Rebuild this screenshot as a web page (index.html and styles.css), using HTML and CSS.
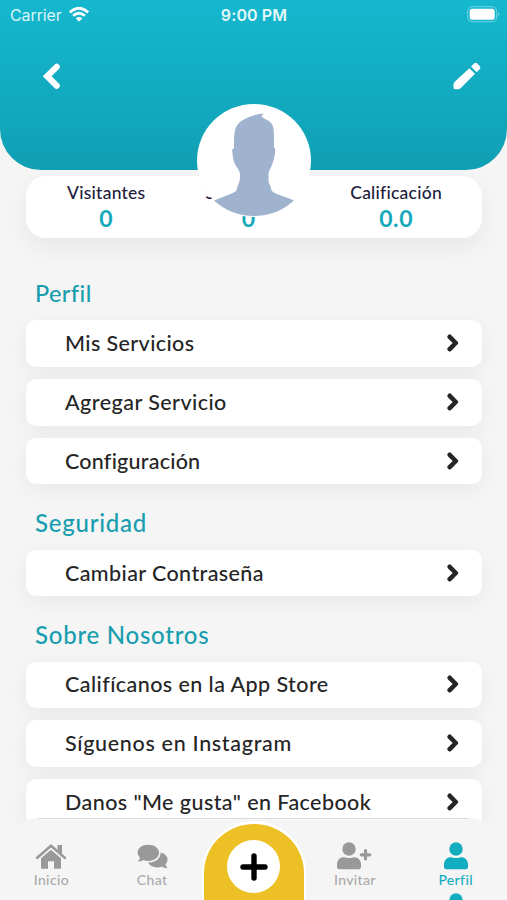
FILE: index.html
```html
<!DOCTYPE html>
<html lang="es">
<head>
<meta charset="utf-8">
<title>Perfil</title>
<link rel="stylesheet" href="styles.css">
</head>
<body>
<svg width="0" height="0" class="defs">
  <symbol id="chevron" viewBox="0 0 12 18"><path d="M2.700 2.800 8.800 9l-6.100 6.200" fill="none" stroke="currentColor" stroke-width="4.600" stroke-linecap="round" stroke-linejoin="round"/></symbol>
  <symbol id="user" viewBox="0 0 24 28"><circle cx="12" cy="7" r="6.700"/><path d="M0 25v-2.500C0 18 3 15.300 7 15.300c1.500 0 2.500.8 5 .8s3.500-.8 5-.8c4 0 7 2.700 7 7.200V25q0 2.300-2.300 2.300H2.300Q0 27.300 0 25z"/></symbol>
</svg>
<div class="screen">
  <header class="header">
    <div class="status">
      <div class="carrier"><span>Carrier</span>
        <svg width="20" height="15" viewBox="0 0 20 15" fill="none" stroke="#fff" stroke-width="2.800"><path d="M.9 5.400Q10-3 19.100 5.400M4.100 8.800q5.900-5.100 11.800 0"/><path d="M6.700 11.300q3.300-2.600 6.600 0L10 14.700z" fill="#fff" stroke="none"/></svg>
      </div>
      <span class="clock">9:00 PM</span>
      <svg class="battery" width="33" height="17" viewBox="0 0 33 17"><rect x=".7" y=".7" width="29" height="15" rx="4.500" fill="none" stroke="#fff" stroke-opacity=".4"/><rect x="2.700" y="2.700" width="25" height="11" rx="2.500" fill="#fff"/><path d="M31.200 6q2 2.200 0 4.500z" fill="#fff" fill-opacity=".5"/></svg>
    </div>
    <div class="tools">
      <svg width="18" height="27" viewBox="0 0 18 27"><path d="M13.700 3.900 4.200 13.300l9.500 9.400" fill="none" stroke="#fff" stroke-width="6.200" stroke-linecap="round"/></svg>
      <svg width="28" height="28" viewBox="0 0 28 28" fill="#fff"><path d="M16.300 6.200 22 11.800 8.100 25.700Q6.700 27.200 4.500 27.300H2Q.5 27.300.5 25.800V22.500Q.6 20.800 2 19.500zM18 4.500l3-3q1.600-1.500 3.300 0l2.300 2.400q1.500 1.700 0 3.300l-3 3z"/></svg>
    </div>
  </header>
  <div class="avatar">
    <svg width="114" height="113" viewBox="0 0 114 113"><path fill="#9fb2ce" d="M67 9.500C58 10 48 14 43 18c-6 5-6 12-6 26.500-2 0-2.200 2-1.500 5C36 54 36.500 58 39 62c2 3 4 5 4 9-.3 5 0 6-1.500 9-1.500 2-1 5-2.500 7-4 3-14 6-22 9.500Q34 112 57 112t40-15.500C89 93 80 90.500 76 88c-2-1.500-2-4-2.500-6-1.500-2-2-4-2-6V71c0-4 1.500-5 3-9 2-5 3-9 3.500-13 .5-3 .5-5-1-5.500 0-13 .5-20-2.500-24-3-4-7-4-9.500-6.500-.5-1.500 0-2 2-3.500z"/></svg>
  </div>
  <section class="stats">
    <div class="stat"><span class="label">Visitantes</span><b>0</b></div>
    <div class="stat middle"><span class="label">Seguidores</span><b>0</b></div>
    <div class="stat right"><span class="label">Calificación</span><b>0.0</b></div>
  </section>
  <main class="menu">
    <h2>Perfil</h2>
    <a class="row"><span class="mis">Mis Servicios</span><svg><use href="#chevron"/></svg></a>
    <a class="row"><span class="agregar">Agregar Servicio</span><svg><use href="#chevron"/></svg></a>
    <a class="row"><span class="config">Configuración</span><svg><use href="#chevron"/></svg></a>
    <h2 class="seg">Seguridad</h2>
    <a class="row"><span class="cambiar">Cambiar Contraseña</span><svg><use href="#chevron"/></svg></a>
    <h2 class="sobre">Sobre Nosotros</h2>
    <a class="row"><span class="store">Califícanos en la App Store</span><svg><use href="#chevron"/></svg></a>
    <a class="row"><span class="insta">Síguenos en Instagram</span><svg><use href="#chevron"/></svg></a>
    <a class="row"><span class="face">Danos "Me gusta" en Facebook</span><svg><use href="#chevron"/></svg></a>
  </main>
  <nav class="tabs">
    <div class="tab"><svg width="30" height="26" viewBox="0 0 30 26"><path d="M1.200 13.800 15 1.800l13.800 12" fill="none" stroke="#999" stroke-width="2.600" stroke-linecap="round"/><path d="M21.500 1H26v9l-4.500-4zM5 14.300 15 5.700l10 8.600v9.400q0 1-1 1h-6v-7.400h-6v7.400H6q-1 0-1-1z"/></svg><span>Inicio</span></div>
    <div class="tab"><svg width="31" height="26" viewBox="0 0 31 26"><path d="M11.300.8C17.500.8 22 4.300 22 8.800s-4.500 8.100-10.700 8.100q-2.700 0-5-.9-2.500 1.700-5.600 1.500 1.700-1.700 2.400-3.600Q.6 11.700.6 8.800c0-4.500 4.500-8 10.700-8z"/><path d="M23.600 8.400c4 1 7 3.700 7 7.100q0 2.900-2.300 5 1 2.200 2.300 3.700-3.200.3-5.600-1.600-2.100.9-4.800.9-6.300 0-9.200-4.900c7.200 0 12.700-4 12.600-10.200z"/></svg><span>Chat</span></div>
    <div class="add"><div class="disc"><svg width="28" height="28" viewBox="0 0 28 28"><path d="M14 3v22M3 14h22" stroke="#000" stroke-width="5.400" stroke-linecap="round"/></svg></div></div>
    <div class="tab invite"><svg width="35" height="28" viewBox="0 0 35 28"><use href="#user" width="24" height="28"/><path d="M28.500 8.500v8.500M24.300 12.800h8.500" stroke="#999" stroke-width="3.200" stroke-linecap="round"/></svg><span>Invitar</span></div>
    <div class="tab active"><svg width="24" height="28"><use href="#user" width="24" height="28"/></svg><span>Perfil</span><svg class="next" width="24" height="28"><use href="#user" width="24" height="28"/></svg></div>
  </nav>
</div>
</body>
</html>
```
FILE: styles.css
```css
* { box-sizing: border-box; }
body { margin: 0; background: #f5f5f5; font-family: Lato, sans-serif; font-weight: 500; }
.defs { position: absolute; }
.screen { position: relative; width: 507px; height: 900px; overflow: hidden; }
.header { height: 170px; border-radius: 0 0 41px 41px; background: linear-gradient(#15b8cf, #109fb3); color: #fff; }
.status { display: grid; grid-template-columns: 1fr auto 1fr; align-items: center; height: 30px; padding: 0 7px 0 10px; font-family: Inter, sans-serif; font-size: 16px; }
.carrier { display: flex; align-items: center; gap: 7px; font-weight: 400; color: #d9f5f8; letter-spacing: -.1px; }
.carrier svg { margin-top: -2px; }
.clock { margin-right: 2px; font-weight: 600; letter-spacing: .1px; color: #e4f8fa; }
.battery { justify-self: end; margin-top: -2px; }
.tools { display: flex; justify-content: space-between; align-items: center; padding: 0 26px 0 43px; height: 92px; }
.avatar { position: absolute; z-index: 2; left: 197px; top: 104px; width: 114px; height: 113px; border-radius: 50%; background: #fff; overflow: hidden; }
.stats { display: flex; justify-content: space-between; width: 456px; height: 62px; margin: 6px 0 0 26px; padding: 5px 40px 0 41px; border-radius: 20px; background: #fff; box-shadow: 0 10px 26px rgba(0,0,0,.06); }
.stat { display: flex; flex-direction: column; align-items: center; line-height: 24px; color: #211c3d; }
.middle { padding-left: 2px; }
.label { font-size: 17.500px; letter-spacing: .25px; }
.stat b { font-size: 23px; line-height: 27px; font-weight: 700; color: #17aabd; letter-spacing: .6px; }
.menu { width: 456px; margin: 29px 0 0 26px; }
h2 { margin: 0; padding-left: 9px; height: 53.300px; line-height: 53px; font-size: 23.500px; font-weight: 500; letter-spacing: .4px; color: #189eaf; }
.seg, .sobre { font-size: 24px; letter-spacing: .75px; }
.row { display: flex; align-items: center; justify-content: space-between; height: 46.700px; margin-bottom: 12px; padding: 0 23px 0 39px; border-radius: 10px; background: #fff; color: #252525; font-size: 21.500px; letter-spacing: .4px; white-space: nowrap; box-shadow: 0 6px 22px rgba(0,0,0,.055); }
.row span { margin-top: -1px; }
.agregar { letter-spacing: .45px; }
.config { letter-spacing: .22px; }
.store, .face { letter-spacing: .43px; }
.insta { letter-spacing: .68px; }
.row svg { width: 12px; height: 18px; margin-top: -1px; }
.tabs { position: absolute; left: 0; bottom: 0; width: 507px; height: 82px; display: flex; border-radius: 40px 40px 0 0; background: #f5f5f5 linear-gradient(#ddd, #ddd) center top / 431px 1px no-repeat; color: #999; fill: #999; }
.tab { flex: 1; display: flex; flex-direction: column; align-items: center; justify-content: flex-end; height: 71px; font-size: 14px; line-height: 18px; letter-spacing: .35px; }
.tab:nth-child(-n+2) { padding-left: 2px; }
.tab span { margin-top: 1px; color: #aaa; }
.invite { padding-right: 2px; }
.add { width: 104px; height: 79px; margin-top: 3px; border: solid #fff; border-width: 3px 2px 0; border-radius: 52px 52px 0 0; background: #edc126; display: flex; justify-content: center; padding-top: 16px; }
.disc { display: grid; place-items: center; width: 53px; height: 53px; border-radius: 50%; background: #fff; }
.active { position: relative; padding-right: 2px; fill: #13adc1; }
.active span { color: #13adc1; }
.next { position: absolute; top: 75px; }
```
